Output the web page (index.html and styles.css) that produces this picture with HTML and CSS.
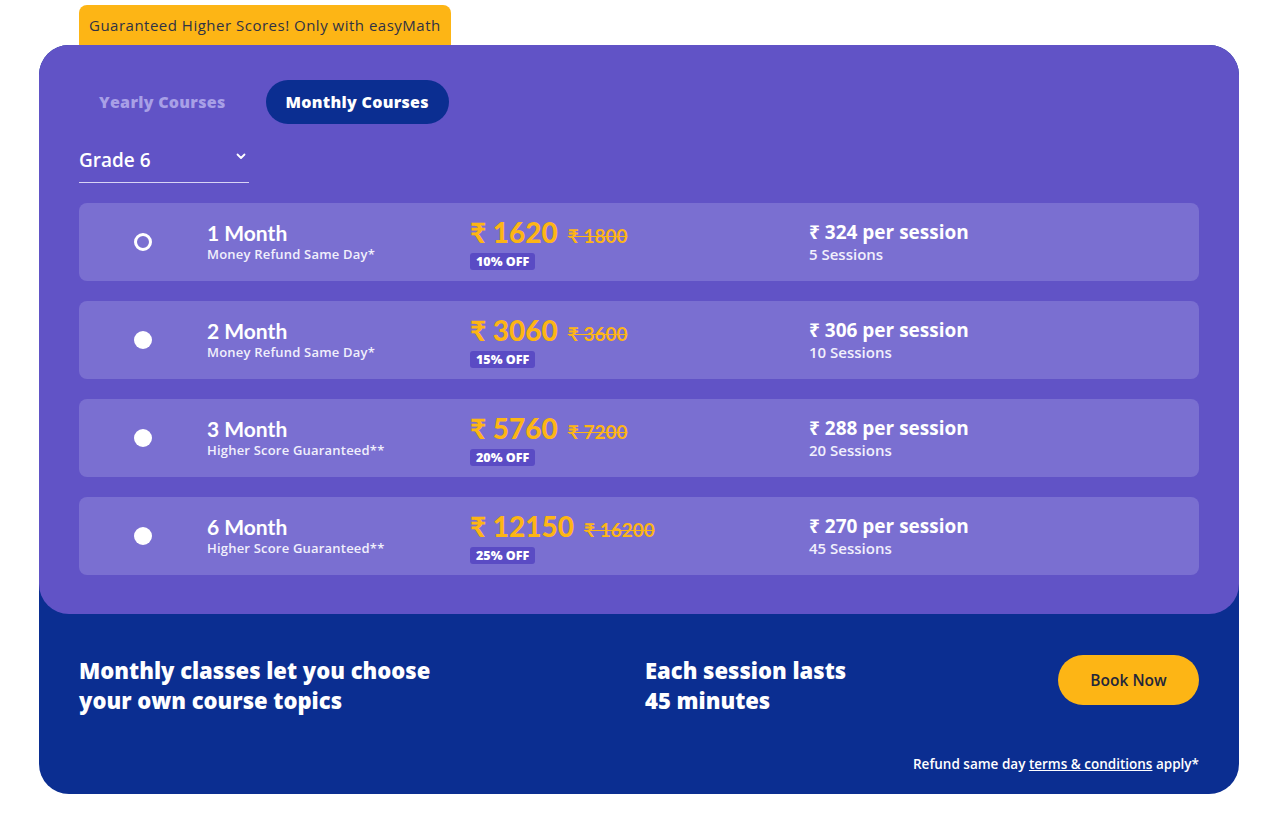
FILE: index.html
```html
<!DOCTYPE html>
<html lang="en">
<head>
<meta charset="utf-8">
<title>easyMath Pricing</title>
<link rel="stylesheet" href="styles.css">
</head>
<body>
<div class="wrap">
  <div class="promo">Guaranteed Higher Scores! Only with easyMath</div>
  <div class="box">
    <div class="panel">
      <div class="tabs">
        <div class="tab">Yearly Courses</div>
        <div class="tab active">Monthly Courses</div>
      </div>
      <div class="select">
        <span>Grade 6</span>
        <svg class="chev" width="10" height="7" viewBox="0 0 10 7"><path d="M1.5 1.5 L5 5 L8.5 1.5" fill="none" stroke="#fff" stroke-width="1.8" stroke-linecap="round" stroke-linejoin="round"/></svg>
      </div>
      <div class="plans">
        <div class="plan">
          <div class="radio-cell"><span class="radio ring"></span></div>
          <div class="name"><div class="title">1 Month</div><div class="sub">Money Refund Same Day*</div></div>
          <div class="price"><div class="amounts"><span class="now">₹ 1620</span><span class="was">₹ 1800</span></div><span class="off">10% OFF</span></div>
          <div class="per"><div class="rate">₹ 324 per session</div><div class="count">5 Sessions</div></div>
        </div>
        <div class="plan">
          <div class="radio-cell"><span class="radio"></span></div>
          <div class="name"><div class="title">2 Month</div><div class="sub">Money Refund Same Day*</div></div>
          <div class="price"><div class="amounts"><span class="now">₹ 3060</span><span class="was">₹ 3600</span></div><span class="off">15% OFF</span></div>
          <div class="per"><div class="rate">₹ 306 per session</div><div class="count">10 Sessions</div></div>
        </div>
        <div class="plan">
          <div class="radio-cell"><span class="radio"></span></div>
          <div class="name"><div class="title">3 Month</div><div class="sub">Higher Score Guaranteed**</div></div>
          <div class="price"><div class="amounts"><span class="now">₹ 5760</span><span class="was">₹ 7200</span></div><span class="off">20% OFF</span></div>
          <div class="per"><div class="rate">₹ 288 per session</div><div class="count">20 Sessions</div></div>
        </div>
        <div class="plan">
          <div class="radio-cell"><span class="radio"></span></div>
          <div class="name"><div class="title">6 Month</div><div class="sub">Higher Score Guaranteed**</div></div>
          <div class="price"><div class="amounts"><span class="now">₹ 12150</span><span class="was">₹ 16200</span></div><span class="off">25% OFF</span></div>
          <div class="per"><div class="rate">₹ 270 per session</div><div class="count">45 Sessions</div></div>
        </div>
      </div>
    </div>
    <div class="footer">
      <div class="foot-row">
        <div class="lead">Monthly classes let you choose<br>your own course topics</div>
        <div class="lead second">Each session lasts<br>45 minutes</div>
        <button class="book">Book Now</button>
      </div>
      <div class="note">Refund same day <a href="#">terms &amp; conditions</a> apply*</div>
    </div>
  </div>
</div>
</body>
</html>
```

FILE: styles.css
```css
* { box-sizing: border-box; }
body {
  margin: 0;
  background: #fff;
  font-family: "Open Sans", "Noto Sans", "DejaVu Sans", sans-serif;
  color: #fff;
}
.wrap {
  width: 1200px;
  margin-left: 39px;
  padding-top: 5px;
}
.promo {
  display: inline-block;
  margin-left: 40px;
  height: 40px;
  padding: 0 10px;
  line-height: 40px;
  background: #FDB515;
  color: #2f3245;
  font-size: 15px;
  letter-spacing: 0.5px;
  border-radius: 8px 8px 0 0;
}
.box {
  background: #0B2E91;
  border-radius: 30px;
}
.panel {
  background: #6153C6;
  border-radius: 30px;
  padding: 35px 40px 39px;
}
.tabs {
  display: flex;
  gap: 20px;
}
.tab {
  height: 44px;
  line-height: 44px;
  padding: 0 20px;
  border-radius: 22px;
  font-size: 16px;
  letter-spacing: 0.3px;
  font-weight: 800;
  color: #A8A0E6;
}
.tab.active {
  background: #0B2E91;
  color: #fff;
}
.select {
  margin-top: 23px;
  width: 170px;
  height: 36px;
  border-bottom: 1px solid #d8d3f5;
  display: flex;
  justify-content: space-between;
  align-items: flex-start;
  font-size: 19px;
  font-weight: 600;
  line-height: 24px;
  padding-top: 1px;
}
.chev { margin: 5px 3px 0 0; }
.plans {
  margin-top: 20px;
  display: flex;
  flex-direction: column;
  gap: 20px;
}
.plan {
  height: 78px;
  background: #7A6FD1;
  border-radius: 8px;
  display: grid;
  grid-template-columns: 128px 263px 339px 1fr;
  align-items: center;
}
.radio-cell { display: flex; justify-content: center; }
.radio {
  width: 18px;
  height: 18px;
  border-radius: 50%;
  background: #fff;
}
.radio.ring {
  background: transparent;
  border: 3px solid #fff;
}
.title {
  font-family: Lato, "Open Sans", sans-serif;
  font-size: 21px;
  font-weight: 700;
  line-height: 24px;
}
.sub {
  font-size: 13px;
  letter-spacing: 0.2px;
  font-weight: 600;
  line-height: 18px;
  color: #f1effc;
}
.price { display: flex; flex-direction: column; align-items: flex-start; margin-top: 2px; }
.amounts { display: flex; align-items: baseline; gap: 10px; line-height: 30px; font-family: Lato, "Open Sans", sans-serif; }
.now {
  font-size: 28px;
  font-weight: 900;
  color: #FDB515;
}
.was {
  font-size: 19px;
  font-weight: 700;
  color: #FDB515;
  text-decoration: line-through;
}
.off {
  margin-top: 2px;
  background: #5A4BC4;
  color: #fff;
  font-size: 12.5px;
  font-weight: 800;
  line-height: 17px;
  padding: 0 6px;
  border-radius: 3px;
}
.rate {
  font-size: 19px;
  font-weight: 700;
  line-height: 24px;
}
.count {
  font-size: 15px;
  font-weight: 600;
  line-height: 20px;
  color: #f1effc;
}
.footer {
  padding: 41px 40px 21px;
}
.foot-row {
  display: flex;
  align-items: flex-start;
}
.lead {
  font-size: 22px;
  font-weight: 800;
  line-height: 30px;
  width: 566px;
}
.lead.second { width: 413px; }
.book {
  width: 141px;
  height: 50px;
  border: none;
  border-radius: 25px;
  background: #FDB515;
  color: #23263a;
  font-family: inherit;
  font-size: 15.5px;
  font-weight: 600;
}
.note {
  margin-top: 40px;
  text-align: right;
  font-size: 13.5px;
  font-weight: 600;
  line-height: 18px;
}
.note a { color: #fff; }
```
